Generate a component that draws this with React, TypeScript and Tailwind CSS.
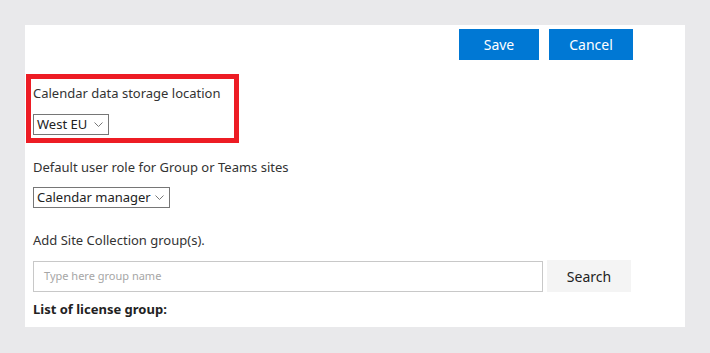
const font = { fontFamily: '"Noto Sans", "Open Sans", sans-serif' };

function Dropdown({ value, width }: { value: string; width: string }) {
  return (
    <div
      className={`flex h-[21px] items-center justify-between border border-[#767676] bg-white pl-[3px] pr-[5px] text-[13px] text-[#222] ${width}`}
    >
      <span className="leading-none">{value}</span>
      <svg width="9" height="5" viewBox="0 0 9 5" className="shrink-0">
        <polyline points="0.5,0.5 4.5,4.5 8.5,0.5" fill="none" stroke="#777" strokeWidth="1" />
      </svg>
    </div>
  );
}

export default function App() {
  return (
    <div className="h-[353px] w-[710px] whitespace-nowrap bg-[#e9e9eb] pt-[25px] pl-[25px]" style={font}>
      <div className="flex h-[302px] w-[660px] flex-col bg-white pt-[4px] pl-[1px]">
        {/* Actions */}
        <div className="flex justify-end gap-[10px] pr-[52px]">
          <button className="h-[31px] w-[80px] bg-[#0078d4] text-[14px] text-white">Save</button>
          <button className="h-[31px] w-[84px] bg-[#0078d4] text-[14px] text-white">Cancel</button>
        </div>

        {/* Highlighted storage location */}
        <div className="mt-[14px] w-[213px] border-[5px] border-[#ed1c24] pl-[2px] pt-[4px] pb-[3px]">
          <p className="text-[13px] leading-[20px] text-[#333]">Calendar data storage location</p>
          <div className="mt-[11px]">
            <Dropdown value="West EU" width="w-[76px]" />
          </div>
        </div>

        <div className="pl-[7px]">
          <p className="mt-[14px] text-[13px] leading-[20px] text-[#333]">
            Default user role for Group or Teams sites
          </p>
          <div className="mt-[10px]">
            <Dropdown value="Calendar manager" width="w-[137px]" />
          </div>

          <p className="mt-[22px] text-[13px] leading-[20px] text-[#333]">Add Site Collection group(s).</p>
          <div className="mt-[10px] flex items-center gap-[4px]">
            <div className="flex h-[31px] w-[510px] items-center border border-[#c8c8c8] pl-[10px] text-[11px] text-[#a6a6a6]">
              Type here group name
            </div>
            <button className="h-[32px] w-[84px] bg-[#f4f4f4] text-[14px] text-[#222]">Search</button>
          </div>
          <p className="mt-[8px] text-[13px] font-bold leading-[18px] text-[#222]">List of license group:</p>
        </div>
      </div>
    </div>
  );
}
